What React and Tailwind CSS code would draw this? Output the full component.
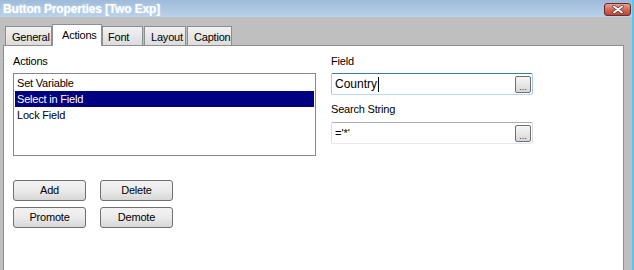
const font = { fontFamily: '"Liberation Sans", Arial, sans-serif' };

function Tab({ label, active, w, pl = 6, gap = 0 }) {
  if (active) {
    return (
      <div
        className="relative z-10 -mb-px h-[22px] shrink-0 border border-b-0 border-[#8c8e94] bg-white pt-[3px] text-[11px] leading-[14px] tracking-[-0.2px] text-black"
        style={{ width: w, paddingLeft: pl, marginLeft: gap }}
      >
        {label}
      </div>
    );
  }
  return (
    <div
      className="h-[19px] shrink-0 border border-b-0 border-[#8c8e94] bg-gradient-to-b from-[#f2f2f2] to-[#dcdcdc] pt-[3px] text-[11px] leading-[14px] tracking-[-0.2px] text-black"
      style={{ width: w, paddingLeft: pl, marginLeft: gap }}
    >
      {label}
    </div>
  );
}

function Ellipsis() {
  return (
    <div className="flex h-[17px] w-[16px] items-end justify-center rounded-[2px] border border-[#707070] bg-gradient-to-b from-[#f6f6f6] to-[#d8d8d8] pb-[1px] text-[9px] leading-[8px] text-[#303060]">
      ...
    </div>
  );
}

function Button({ label }) {
  return (
    <div className="flex h-[21px] w-[73px] items-center justify-center rounded-[3px] border border-[#707070] bg-gradient-to-b from-[#f2f2f2] via-[#ebebeb] to-[#d6d6d6] text-[11px] tracking-[-0.2px] text-black">
      {label}
    </div>
  );
}

export default function App() {
  const items = ['Set Variable', 'Select in Field', 'Lock Field'];
  return (
    <div className="flex h-[270px] w-[634px] overflow-hidden bg-[#bfbfbf]" style={font}>
      <div className="flex w-[632px] flex-col">
        {/* title bar */}
        <div className="flex h-[17px] items-center justify-between bg-gradient-to-b from-[#9fbbd9] to-[#b9d1ea] pl-[3px] pr-[1px]">
          <span className="text-[12px] font-bold leading-[14px] tracking-[-0.15px] text-white [text-shadow:0_0_2px_#dbe8f5]">
            Button Properties [Two Exp]
          </span>
          <div className="mt-[2px] flex h-[13px] w-[27px] items-center justify-center rounded-[3px] border border-[#6e2a2a] bg-gradient-to-b from-[#e3a291] via-[#cf6a58] to-[#b8483a]">
            <svg width="12" height="9" viewBox="0 0 12 9">
              <path d="M2 1.5 L10 7.5 M10 1.5 L2 7.5" stroke="#5a2a2a" strokeWidth="3.2" strokeLinecap="round" />
              <path d="M2 1.5 L10 7.5 M10 1.5 L2 7.5" stroke="#ffffff" strokeWidth="2" strokeLinecap="round" />
            </svg>
          </div>
        </div>

        <div className="flex flex-1 flex-col pl-[3px] pr-[8px] pt-[7px]">
          {/* tabs */}
          <div className="flex h-[21px] items-end pl-[2px]">
            <Tab label="General" w={47} />
            <Tab label="Actions" active w={50} pl={9} />
            <Tab label="Font" w={41} pl={5} />
            <Tab label="Layout" w={42} gap={1} />
            <Tab label="Caption" w={45} gap={1} />
          </div>

          {/* panel */}
          <div className="flex flex-1 border border-b-0 border-[#8c8e94] bg-white pl-[9px] pt-[8px]">
            <div className="flex w-[303px] flex-col">
              <div className="mb-[5px] h-[14px] text-[11px] leading-[14px] tracking-[-0.2px] text-black">Actions</div>
              <div className="h-[83px] border border-[#828790] p-[1px]">
                {items.map((it, i) => (
                  <div
                    key={it}
                    className={
                      'h-[16px] pl-[2px] text-[11px] leading-[16px] tracking-[-0.2px] ' +
                      (i === 1 ? 'bg-[#000080] text-white' : 'text-black')
                    }
                  >
                    {it}
                  </div>
                ))}
              </div>
              <div className="mt-[24px] grid grid-cols-[73px_73px] gap-x-[14px] gap-y-[6px]">
                <Button label="Add" />
                <Button label="Delete" />
                <Button label="Promote" />
                <Button label="Demote" />
              </div>
            </div>

            <div className="ml-[15px] flex w-[202px] flex-col">
              <div className="mb-[5px] h-[14px] text-[11px] leading-[14px] tracking-[-0.2px] text-black">Field</div>
              <div className="flex h-[22px] items-center justify-between rounded-[2px] border border-x-[#a4c9e3] border-b-[#b7d9ed] border-t-[#3d7bad] pl-[3px] pr-[1px]">
                <span className="flex items-center text-[12px] leading-[16px] text-black">
                  Country
                  <span className="ml-[1px] inline-block h-[15px] w-[1px] bg-black" />
                </span>
                <Ellipsis />
              </div>
              <div className="mb-[6px] mt-[7px] h-[14px] text-[11px] leading-[14px] tracking-[-0.2px] text-black">Search String</div>
              <div className="flex h-[22px] items-center justify-between rounded-[2px] border border-x-[#dbdfe6] border-b-[#e3e9ef] border-t-[#abadb3] pl-[3px] pr-[1px]">
                <span className="text-[11px] leading-[14px] text-black">='*'</span>
                <Ellipsis />
              </div>
            </div>
          </div>
        </div>
      </div>
      <div className="w-[2px] bg-[#5cc4ee]" />
    </div>
  );
}
